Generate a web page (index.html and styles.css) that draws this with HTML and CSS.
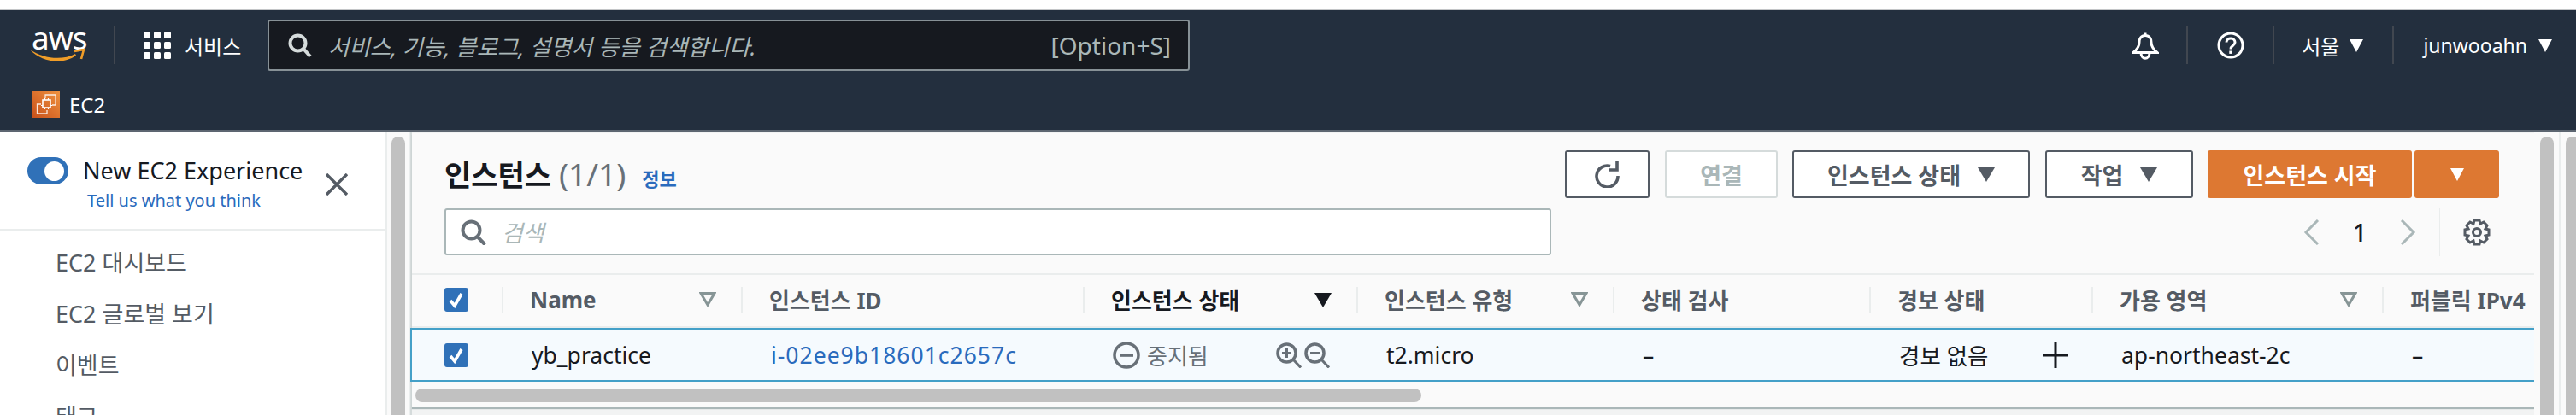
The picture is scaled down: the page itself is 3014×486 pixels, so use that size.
FILE: index.html
```html
<!DOCTYPE html>
<html lang="ko">
<head>
    <meta charset="UTF-8">
    <title>인스턴스 | EC2</title>
    <link rel="stylesheet" href="styles.css">
</head>
<body>
<header class="topnav">
    <div class="nav-row">
        <div class="aws-logo">
            <span class="aws-word">aws</span>
            <svg class="aws-smile" viewBox="0 0 64 16"><path d="M0 1C16 12 38 14 53 6l1 2C38 19 14 16 0 1z" fill="#f09d28"/><path d="M52 3l11-2-3 11" fill="none" stroke="#f09d28" stroke-width="2.600"/></svg>
        </div>
        <span class="nav-sep sep-logo"></span>
        <svg class="grid-icon" viewBox="0 0 32 32" fill="#fff">
            <rect x="0" y="0" width="8" height="8" rx="1.5"/><rect x="12" y="0" width="8" height="8" rx="1.5"/><rect x="24" y="0" width="8" height="8" rx="1.5"/>
            <rect x="0" y="12" width="8" height="8" rx="1.5"/><rect x="12" y="12" width="8" height="8" rx="1.5"/><rect x="24" y="12" width="8" height="8" rx="1.5"/>
            <rect x="0" y="24" width="8" height="8" rx="1.5"/><rect x="12" y="24" width="8" height="8" rx="1.5"/><rect x="24" y="24" width="8" height="8" rx="1.5"/>
        </svg>
        <span class="nav-text services">서비스</span>
        <div class="global-search">
            <svg class="search-icon" viewBox="0 0 28 28"><circle cx="11.5" cy="11.5" r="9" fill="none" stroke="#d5dbdb" stroke-width="4"/><path d="M18 18l8 9" stroke="#d5dbdb" stroke-width="4"/></svg>
            <span class="global-placeholder">서비스, 기능, 블로그, 설명서 등을 검색합니다.</span>
            <span class="global-shortcut">[Option+S]</span>
        </div>
        <div class="nav-right">
            <svg class="bell-icon" viewBox="0 0 32 32"><path d="M16 4c-5 0-7 4-7 8 0 5-2 8-7 12h28c-5-4-7-7-7-12 0-4-2-8-7-8zM16 1v3M11 24c0 9 10 9 10 0" fill="none" stroke="#fff" stroke-width="3"/></svg>
            <span class="nav-sep sep-bell"></span>
            <svg class="help-icon" viewBox="0 0 32 32"><circle cx="16" cy="16" r="14" fill="none" stroke="#fff" stroke-width="3"/><path d="M11 12.500c0-6 10-6 10 0 0 4-5 3.500-5 8" fill="none" stroke="#fff" stroke-width="3"/><rect x="14.300" y="22.500" width="3.400" height="3.400" fill="#fff"/></svg>
            <span class="nav-sep sep-help"></span>
            <span class="nav-text region">서울</span>
            <span class="tri tri-white tri-region"></span>
            <span class="nav-sep sep-region"></span>
            <span class="nav-text account">junwooahn</span>
            <span class="tri tri-white tri-account"></span>
        </div>
    </div>
    <div class="nav-row service-row">
        <svg class="ec2-icon" viewBox="0 0 32 32">
            <defs><linearGradient id="ec2-fill" x1="0" y1="1" x2="1" y2="0"><stop offset="0" stop-color="#c8511b"/><stop offset="1" stop-color="#f0933f"/></linearGradient></defs>
            <rect width="32" height="32" fill="url(#ec2-fill)"/>
            <path d="M15 9V5h12v12h-4M10 16H5.500v11H17v-4" fill="none" stroke="#fff" stroke-width="1.300" opacity="0.850"/>
            <rect x="12" y="11" width="9" height="9" fill="none" stroke="#fff" stroke-width="1.600"/>
            <path d="M14.500 9v2M18.500 9v2M14.500 20v2M18.500 20v2M10 13.500h2M10 17.500h2M21 13.500h2M21 17.500h2" stroke="#fff" stroke-width="1.200"/>
        </svg>
        <span class="nav-text service-name">EC2</span>
    </div>
</header>

<div class="page">
    <aside class="sidebar">
        <div class="side-top">
            <div class="experience">
                <span class="toggle"><span class="toggle-knob"></span></span>
                <span class="experience-title">New EC2 Experience</span>
                <svg class="close-icon" viewBox="0 0 26 26"><path d="M1 1l24 24M25 1L1 25" stroke="#545b64" stroke-width="3.400"/></svg>
            </div>
            <a class="feedback">Tell us what you think</a>
        </div>
        <nav class="side-nav">
            <a>EC2 대시보드</a>
            <a>EC2 글로벌 보기</a>
            <a>이벤트</a>
            <a>태그</a>
        </nav>
    </aside>
    <div class="scroll-track side-scroll"><span class="scroll-thumb"></span></div>

    <main class="content">
        <section class="panel">
            <div class="panel-head">
                <div class="head-left">
                    <h1 class="panel-title">인스턴스 <span class="count">(1/1)</span> <a class="info">정보</a></h1>
                    <div class="filter-box">
                        <svg class="filter-search" viewBox="0 0 30 30"><circle cx="12.500" cy="12.500" r="10" fill="none" stroke="#687078" stroke-width="4"/><path d="M19.500 20l9 9.500" stroke="#687078" stroke-width="4"/></svg>
                        <span class="filter-placeholder">검색</span>
                    </div>
                </div>
                <div class="head-right">
                    <div class="actions">
                        <button class="btn btn-refresh"><svg viewBox="0 0 32 32"><path d="M19 6.500A12.500 12.500 0 1 0 28 18" fill="none" stroke="#545b64" stroke-width="3.600"/><path d="M27 0v11H17" fill="none" stroke="#545b64" stroke-width="3.600"/></svg></button>
                        <button class="btn btn-disabled">연결</button>
                        <button class="btn btn-state">인스턴스 상태<span class="tri tri-gray"></span></button>
                        <button class="btn btn-work">작업<span class="tri tri-gray"></span></button>
                        <button class="btn btn-primary">인스턴스 시작</button>
                        <button class="btn btn-primary btn-caret"><span class="tri tri-white"></span></button>
                    </div>
                    <div class="pager">
                        <svg class="pager-arrow" viewBox="0 0 19 30"><path d="M17 1L3 15l14 14" fill="none" stroke="#aab7b8" stroke-width="3"/></svg>
                        <span class="page-num">1</span>
                        <svg class="pager-arrow" viewBox="0 0 19 30"><path d="M2 1l14 14L2 29" fill="none" stroke="#aab7b8" stroke-width="3"/></svg>
                        <span class="pager-sep"></span>
                        <svg class="gear-icon" viewBox="0 0 32 32"><path d="M13 2h6l1 4 4-2 4 4-2 4 4 1v6l-4 1 2 4-4 4-4-2-1 4h-6l-1-4-4 2-4-4 2-4-4-1v-6l4-1-2-4 4-4 4 2z" fill="none" stroke="#545b64" stroke-width="3"/><circle cx="16" cy="16" r="4.500" fill="none" stroke="#545b64" stroke-width="3"/></svg>
                    </div>
                </div>
            </div>

            <div class="table-wrap">
                <div class="table-row table-header">
                    <div class="cell cell-check"><span class="checkbox"><svg viewBox="0 0 28 28"><path d="M7 15l5 6 8-14" fill="none" stroke="#fff" stroke-width="3.600"/></svg></span></div>
                    <div class="cell">Name<svg class="filter-tri" viewBox="0 0 20 18"><path d="M2 1.500h16L10 15z" fill="none" stroke="#879596" stroke-width="3"/></svg></div>
                    <div class="cell">인스턴스 ID</div>
                    <div class="cell cell-sorted">인스턴스 상태<span class="tri tri-dark"></span></div>
                    <div class="cell">인스턴스 유형<svg class="filter-tri" viewBox="0 0 20 18"><path d="M2 1.500h16L10 15z" fill="none" stroke="#879596" stroke-width="3"/></svg></div>
                    <div class="cell">상태 검사</div>
                    <div class="cell">경보 상태</div>
                    <div class="cell">가용 영역<svg class="filter-tri" viewBox="0 0 20 18"><path d="M2 1.500h16L10 15z" fill="none" stroke="#879596" stroke-width="3"/></svg></div>
                    <div class="cell">퍼블릭 IPv4</div>
                </div>
                <div class="table-row table-selected">
                    <div class="cell cell-check"><span class="checkbox"><svg viewBox="0 0 28 28"><path d="M7 15l5 6 8-14" fill="none" stroke="#fff" stroke-width="3.600"/></svg></span></div>
                    <div class="cell">yb_practice</div>
                    <div class="cell"><a class="instance-id">i-02ee9b18601c2657c</a></div>
                    <div class="cell cell-status">
                        <svg class="status-icon" viewBox="0 0 32 32"><circle cx="16" cy="16" r="14" fill="none" stroke="#687078" stroke-width="3.500"/><rect x="8" y="14.200" width="16" height="3.600" fill="#687078"/></svg>
                        <span class="status-text">중지됨</span>
                        <svg class="zoom-icon" viewBox="0 0 30 30"><circle cx="12.500" cy="12.500" r="10.500" fill="none" stroke="#687078" stroke-width="3.500"/><path d="M20 20l9 9.500M7 12.500h11M12.500 7v11" fill="none" stroke="#687078" stroke-width="3"/></svg>
                        <svg class="zoom-icon" viewBox="0 0 30 30"><circle cx="12.500" cy="12.500" r="10.500" fill="none" stroke="#687078" stroke-width="3.500"/><path d="M20 20l9 9.500M7 12.500h11" fill="none" stroke="#687078" stroke-width="3"/></svg>
                    </div>
                    <div class="cell">t2.micro</div>
                    <div class="cell">–</div>
                    <div class="cell cell-alarm">경보 없음<svg class="plus-icon" viewBox="0 0 30 30"><path d="M0 15h30M15 0v30" stroke="#16191f" stroke-width="3"/></svg></div>
                    <div class="cell">ap-northeast-2c</div>
                    <div class="cell">–</div>
                </div>
                <div class="hscroll"><span class="hscroll-thumb"></span></div>
            </div>
        </section>
    </main>

    <div class="scroll-track page-scroll"><span class="scroll-thumb"></span></div>
    <div class="scroll-track outer-scroll"><span class="scroll-thumb"></span></div>
</div>
</body>
</html>
```

FILE: styles.css
```css
/* General Styles */
html, body {
    height: 100%;
}
body {
    margin: 0;
    height: 486px;
    overflow: hidden;
    background: #fff;
    color: #16191f;
    font-family: "Noto Sans", "Noto Sans CJK KR", sans-serif;
}
svg {
    display: block;
    flex: none;
}
button {
    font-family: inherit;
}

/* Triangles */
.tri {
    display: inline-block;
    flex: none;
    width: 0;
    height: 0;
    border-left: 8px solid transparent;
    border-right: 8px solid transparent;
    border-top: 15px solid #fff;
}
.tri-gray {
    border-top-color: #545b64;
    border-left-width: 10px;
    border-right-width: 10px;
    border-top-width: 17px;
}
.tri-dark {
    border-top-color: #16191f;
    border-left-width: 10px;
    border-right-width: 10px;
    border-top-width: 17px;
    margin-left: auto;
    margin-right: 29px;
}

/* Top navigation */
.topnav {
    margin-top: 10px;
    height: 144px;
    box-sizing: border-box;
    background: #232f3e;
    border-top: 2px solid #c4c6c8;
    border-bottom: 2px solid #5d6671;
}
.nav-row {
    display: flex;
    align-items: center;
    height: 82px;
    padding: 0 28px 0 35px;
}
.service-row {
    height: 58px;
    padding-left: 38px;
    padding-bottom: 2px;
    box-sizing: border-box;
}
.nav-text {
    color: #fff;
    font-size: 24px;
    white-space: nowrap;
}
.nav-sep {
    width: 2px;
    height: 44px;
    background: #414750;
    flex: none;
}
.aws-logo {
    position: relative;
    width: 64px;
    height: 40px;
    flex: none;
}
.aws-word {
    position: absolute;
    left: 2px;
    top: -11px;
    color: #fff;
    font-size: 37px;
    line-height: 44px;
    letter-spacing: -1px;
}
.aws-smile {
    position: absolute;
    left: 0;
    bottom: 0;
    width: 64px;
    height: 16px;
}
.sep-logo {
    margin-left: 34px;
}
.grid-icon {
    width: 32px;
    height: 32px;
    margin-left: 33px;
}
.services {
    flex: none;
    width: 62px;
    margin-left: 16px;
}
.global-search {
    display: flex;
    flex: none;
    align-items: center;
    width: 1079px;
    height: 60px;
    margin-left: 35px;
    padding: 0 20px 0 22px;
    box-sizing: border-box;
    background: #16191f;
    border: 2px solid #879196;
    border-radius: 3px;
}
.search-icon {
    width: 28px;
    height: 28px;
}
.global-placeholder {
    margin-left: 19px;
    color: #aab7b8;
    font-size: 26.500px;
    font-style: italic;
}
.global-shortcut {
    margin-left: auto;
    color: #aab7b8;
    font-size: 28px;
}
.nav-right {
    display: flex;
    align-items: center;
    margin-left: auto;
}
.bell-icon {
    width: 32px;
    height: 33px;
}
.sep-bell {
    margin-left: 32px;
}
.help-icon {
    width: 32px;
    height: 32px;
    margin-left: 34px;
}
.sep-help {
    margin-left: 33px;
}
.region {
    margin-left: 32px;
}
.tri-region {
    margin-left: 12px;
}
.sep-region {
    margin-left: 34px;
}
.account {
    margin-left: 34px;
    font-size: 23px;
}
.tri-account {
    margin-left: 13px;
}
.ec2-icon {
    width: 32px;
    height: 32px;
}
.service-name {
    margin-left: 11px;
}

/* Page columns */
.page {
    display: flex;
    height: 332px;
    overflow: hidden;
}
.sidebar {
    flex: none;
    box-sizing: border-box;
    border-right: 3px solid #eaeded;
    width: 453px;
    overflow: hidden;
}
.side-top {
    height: 116px;
    box-sizing: border-box;
    padding: 30px 0 0 32px;
    border-bottom: 2px solid #eaeded;
}
.experience {
    display: flex;
    align-items: flex-start;
}
.toggle {
    width: 48px;
    height: 32px;
    flex: none;
    display: flex;
    align-items: center;
    justify-content: flex-end;
    padding-right: 5px;
    box-sizing: border-box;
    background: #3071b8;
    border-radius: 16px;
}
.toggle-knob {
    width: 23px;
    height: 23px;
    background: #fff;
    border-radius: 50%;
}
.experience-title {
    margin-left: 17px;
    font-size: 27px;
    line-height: 32px;
    white-space: nowrap;
}
.close-icon {
    width: 26px;
    height: 26px;
    margin: 19px 0 0 27px;
}
.feedback {
    display: block;
    margin: -8px 0 0 70px;
    color: #2a6bbd;
    font-size: 20px;
    line-height: 28px;
}
.side-nav {
    padding: 16px 0 0 65px;
}
.side-nav a {
    display: block;
    height: 60px;
    color: #545b64;
    font-size: 27px;
    line-height: 44px;
    white-space: nowrap;
}
.scroll-track {
    flex: none;
    box-sizing: border-box;
    background: #fafafa;
    overflow: hidden;
}
.scroll-thumb {
    display: block;
    width: 16px;
    height: 326px;
    margin-top: 6px;
    background: #c1c1c1;
    border-radius: 8px 8px 0 0;
}
.side-scroll {
    width: 27px;
    padding-left: 5px;
    border-right: 1px solid #eaeded;
}
.page-scroll {
    width: 31px;
    padding-left: 7px;
    border-right: 2px solid #eaeded;
}
.outer-scroll {
    width: 18px;
    padding-left: 6px;
}

/* Instances panel */
.content {
    width: 2485px;
    flex: none;
    padding-top: 2px;
    background: #f2f3f3;
    border-left: 2px solid #d5dbdb;
    box-sizing: border-box;
}
.panel {
    background: #fafafa;
    box-shadow: 0 2px 1px #aab7b8;
    height: 321px;
    display: flex;
    flex-direction: column;
}
.panel-head {
    display: flex;
    justify-content: space-between;
    height: 164px;
    padding: 20px 41px 0 38px;
    box-sizing: border-box;
}
.panel-title {
    margin: 0;
    height: 68px;
    display: flex;
    align-items: baseline;
    font-size: 34px;
    font-weight: 700;
    line-height: 56px;
    white-space: pre;
}
.count {
    color: #687078;
    font-size: 37px;
    font-weight: 400;
}
.info {
    margin-left: 19px;
    color: #2a6bbd;
    font-size: 22px;
    font-weight: 700;
}
.filter-box {
    display: flex;
    align-items: center;
    width: 1295px;
    height: 55px;
    padding-left: 17px;
    box-sizing: border-box;
    background: #fff;
    border: 2px solid #aab7b8;
    border-radius: 3px;
}
.filter-search {
    width: 30px;
    height: 30px;
}
.filter-placeholder {
    margin-left: 18px;
    color: #aab7b8;
    font-size: 27px;
    font-style: italic;
}
.head-right {
    display: flex;
    flex-direction: column;
    align-items: flex-end;
}
.actions {
    display: flex;
    height: 56px;
}
.btn {
    display: flex;
    align-items: center;
    justify-content: center;
    height: 56px;
    padding: 0;
    box-sizing: border-box;
    background: #fff;
    border: 2px solid #545b64;
    border-radius: 3px;
    color: #545b64;
    font-size: 27px;
    font-weight: 700;
}
.btn-refresh {
    width: 99px;
}
.btn-refresh svg {
    width: 32px;
    height: 32px;
}
.btn-disabled {
    width: 132px;
    margin-left: 18px;
    border-color: #d5dbdb;
    color: #aab7b8;
}
.btn-state {
    width: 278px;
    margin-left: 17px;
    gap: 20px;
}
.btn-work {
    width: 173px;
    margin-left: 18px;
    gap: 20px;
}
.btn-primary {
    width: 239px;
    margin-left: 17px;
    background: #dd7832;
    border-color: #dd7832;
    color: #fff;
}
.btn-caret {
    width: 99px;
    margin-left: 3px;
}
.pager {
    display: flex;
    align-items: center;
    height: 56px;
    margin-top: 12px;
    padding-right: 10px;
}
.pager-arrow {
    width: 19px;
    height: 30px;
}
.page-num {
    width: 94px;
    text-align: center;
    font-size: 28px;
    font-weight: 500;
}
.pager-sep {
    width: 1px;
    height: 56px;
    margin: 0 27px;
    background: #eaeded;
}
.gear-icon {
    width: 32px;
    height: 32px;
}

/* Table */
.table-wrap {
    flex: 1;
    border-top: 2px solid #eaeded;
}
.table-row {
    display: grid;
    grid-template-columns: 105px 280px 400px 320px 300px 300px 260px 340px 177px;
    overflow: hidden;
}
.table-header {
    height: 60px;
    color: #545b64;
    font-size: 26px;
    font-weight: 700;
    background: #fafafa;
    border-bottom: 2px solid #eaeded;
}
.table-header .cell {
    border-left: 2px solid #eaeded;
    height: 30px;
    margin-top: 14px;
    padding: 0 0 0 31px;
    overflow: visible;
}
.table-header .cell-check {
    border-left: 0;
    padding-left: 38px;
}
.table-header .cell-sorted {
    color: #16191f;
}
.cell {
    display: flex;
    align-items: center;
    white-space: nowrap;
    box-sizing: border-box;
    padding-left: 33px;
    overflow: hidden;
}
.cell-check {
    padding-left: 38px;
}
.checkbox {
    width: 28px;
    height: 28px;
    flex: none;
    background: #3071b8;
    border-radius: 3px;
}
.filter-tri {
    width: 20px;
    height: 18px;
    margin-left: auto;
    margin-right: 29px;
}
.table-selected {
    height: 63px;
    box-sizing: border-box;
    margin-left: -2px;
    padding-left: 2px;
    background: #f5fafe;
    border: 2px solid #44a0c8;
    border-right: 0;
    font-size: 26.500px;
}
.table-selected .cell-check {
    padding-left: 36px;
}
.instance-id {
    color: #2a6bbd;
    letter-spacing: 1px;
}
.cell-status {
    color: #687078;
    font-size: 26px;
}
.status-icon {
    width: 32px;
    height: 32px;
}
.status-text {
    flex: none;
    width: 72px;
    margin-left: 8px;
    margin-right: 79px;
}
.zoom-icon {
    width: 30px;
    height: 30px;
    margin-right: 3px;
}
.plus-icon {
    width: 30px;
    height: 30px;
    margin-left: 64px;
}
.hscroll {
    height: 30px;
    padding: 8px 0 0 4px;
    box-sizing: border-box;
}
.hscroll-thumb {
    display: block;
    width: 1177px;
    height: 16px;
    background: #c1c1c1;
    border-radius: 8px;
}
```
